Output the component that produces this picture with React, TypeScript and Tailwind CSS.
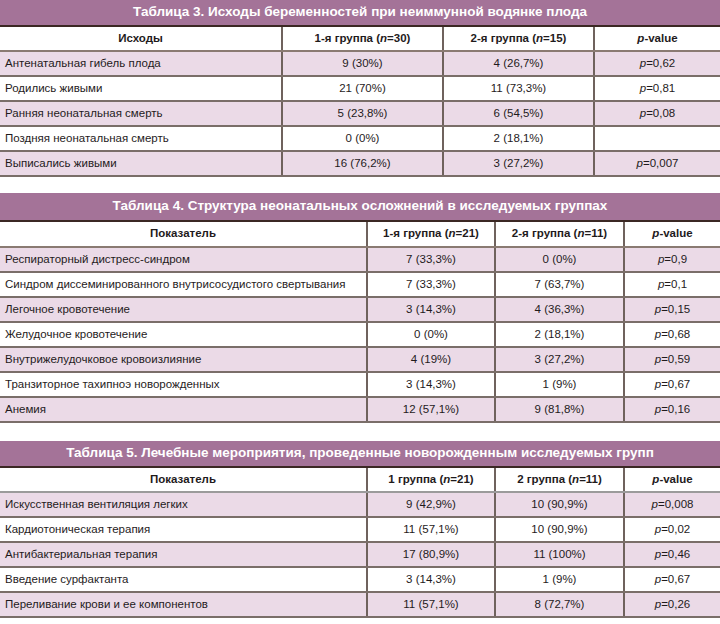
import React from "react";

type Row = [string, string, string, string];

function PVal({ v }: { v: string }) {
  if (!v) return null;
  const rest = v.replace(/^p/, "");
  return (
    <span>
      <i>p</i>
      {rest}
    </span>
  );
}

function GroupHead({ text }: { text: string }) {
  const m = text.match(/^(.*)\(n(=\d+)\)$/);
  if (!m) return <span>{text}</span>;
  return (
    <span>
      {m[1]}(<i>n</i>
      {m[2]})
    </span>
  );
}

function Table({
  title,
  head,
  rows,
  widths,
  titleH,
  headH,
  headBorder,
}: {
  title: string;
  head: Row;
  rows: Row[];
  widths: [string, string, string, string];
  titleH: string;
  headH: string;
  headBorder: string;
}) {
  return (
    <div className="w-[720px]">
      <div
        className={`${titleH} bg-[#a47398] border-b-2 border-[#3b2824] flex items-center justify-center text-white font-bold text-[13.5px]`}
      >
        {title}
      </div>
      <div className={`${headH} flex bg-white border-b-2 ${headBorder} font-bold text-[11.5px]`}>
        <div className={`${widths[0]} flex items-center justify-center`}>{head[0]}</div>
        <div className={`${widths[1]} flex items-center justify-center border-l-2 border-[#6f625d]`}>
          <GroupHead text={head[1]} />
        </div>
        <div className={`${widths[2]} flex items-center justify-center border-l-2 border-[#6f625d]`}>
          <GroupHead text={head[2]} />
        </div>
        <div className={`${widths[3]} flex items-center justify-center border-l-2 border-[#6f625d]`}>
          <span>
            <i>p</i>-value
          </span>
        </div>
      </div>
      {rows.map((r, i) => (
        <div
          key={i}
          className={`h-[25px] flex border-b-2 border-[#7a6e69] text-[11.5px] ${i % 2 === 0 ? "bg-[#ebdae7]" : "bg-white"}`}
        >
          <div className={`${widths[0]} flex items-center pl-[5px] whitespace-nowrap`}>{r[0]}</div>
          <div className={`${widths[1]} flex items-center justify-center border-l-2 border-[#6f625d]`}>{r[1]}</div>
          <div className={`${widths[2]} flex items-center justify-center border-l-2 border-[#6f625d]`}>{r[2]}</div>
          <div className={`${widths[3]} flex items-center justify-center border-l-2 border-[#6f625d]`}>
            <PVal v={r[3]} />
          </div>
        </div>
      ))}
    </div>
  );
}

export default function App() {
  const t3: Row[] = [
    ["Антенатальная гибель плода", "9 (30%)", "4 (26,7%)", "p=0,62"],
    ["Родились живыми", "21 (70%)", "11 (73,3%)", "p=0,81"],
    ["Ранняя неонатальная смерть", "5 (23,8%)", "6 (54,5%)", "p=0,08"],
    ["Поздняя неонатальная смерть", "0 (0%)", "2 (18,1%)", ""],
    ["Выписались живыми", "16 (76,2%)", "3 (27,2%)", "p=0,007"],
  ];
  const t4: Row[] = [
    ["Респираторный дистресс-синдром", "7 (33,3%)", "0 (0%)", "p=0,9"],
    ["Синдром диссеминированного внутрисосудистого свертывания", "7 (33,3%)", "7 (63,7%)", "p=0,1"],
    ["Легочное кровотечение", "3 (14,3%)", "4 (36,3%)", "p=0,15"],
    ["Желудочное кровотечение", "0 (0%)", "2 (18,1%)", "p=0,68"],
    ["Внутрижелудочковое кровоизлияние", "4 (19%)", "3 (27,2%)", "p=0,59"],
    ["Транзиторное тахипноэ новорожденных", "3 (14,3%)", "1 (9%)", "p=0,67"],
    ["Анемия", "12 (57,1%)", "9 (81,8%)", "p=0,16"],
  ];
  const t5: Row[] = [
    ["Искусственная вентиляция легких", "9 (42,9%)", "10 (90,9%)", "p=0,008"],
    ["Кардиотоническая терапия", "11 (57,1%)", "10 (90,9%)", "p=0,02"],
    ["Антибактериальная терапия", "17 (80,9%)", "11 (100%)", "p=0,46"],
    ["Введение сурфактанта", "3 (14,3%)", "1 (9%)", "p=0,67"],
    ["Переливание крови и ее компонентов", "11 (57,1%)", "8 (72,7%)", "p=0,26"],
  ];
  return (
    <div
      className="w-[720px] h-[624px] bg-white text-[#1f1b1c] overflow-hidden flex flex-col"
      style={{ fontFamily: '"Liberation Sans", Arial, sans-serif' }}
    >
      <Table
        title="Таблица 3. Исходы беременностей при неиммунной водянке плода"
        head={["Исходы", "1-я группа (n=30)", "2-я группа (n=15)", "p-value"]}
        rows={t3}
        widths={["w-[281px]", "w-[161px]", "w-[151px]", "w-[127px]"]}
        titleH="h-[27px]"
        headH="h-[25px]"
        headBorder="border-[#8a7a72]"
      />
      <div className="h-[16px] shrink-0" />
      <Table
        title="Таблица 4. Структура неонатальных осложнений в исследуемых группах"
        head={["Показатель", "1-я группа (n=21)", "2-я группа (n=11)", "p-value"]}
        rows={t4}
        widths={["w-[366px]", "w-[128px]", "w-[129px]", "w-[97px]"]}
        titleH="h-[29px]"
        headH="h-[26px]"
        headBorder="border-[#8a7a72]"
      />
      <div className="h-[18px] shrink-0" />
      <Table
        title="Таблица 5. Лечебные мероприятия, проведенные новорожденным исследуемых групп"
        head={["Показатель", "1 группа (n=21)", "2 группа (n=11)", "p-value"]}
        rows={t5}
        widths={["w-[366px]", "w-[128px]", "w-[129px]", "w-[97px]"]}
        titleH="h-[27px]"
        headH="h-[25px]"
        headBorder="border-[#9b9b9b]"
      />
    </div>
  );
}
